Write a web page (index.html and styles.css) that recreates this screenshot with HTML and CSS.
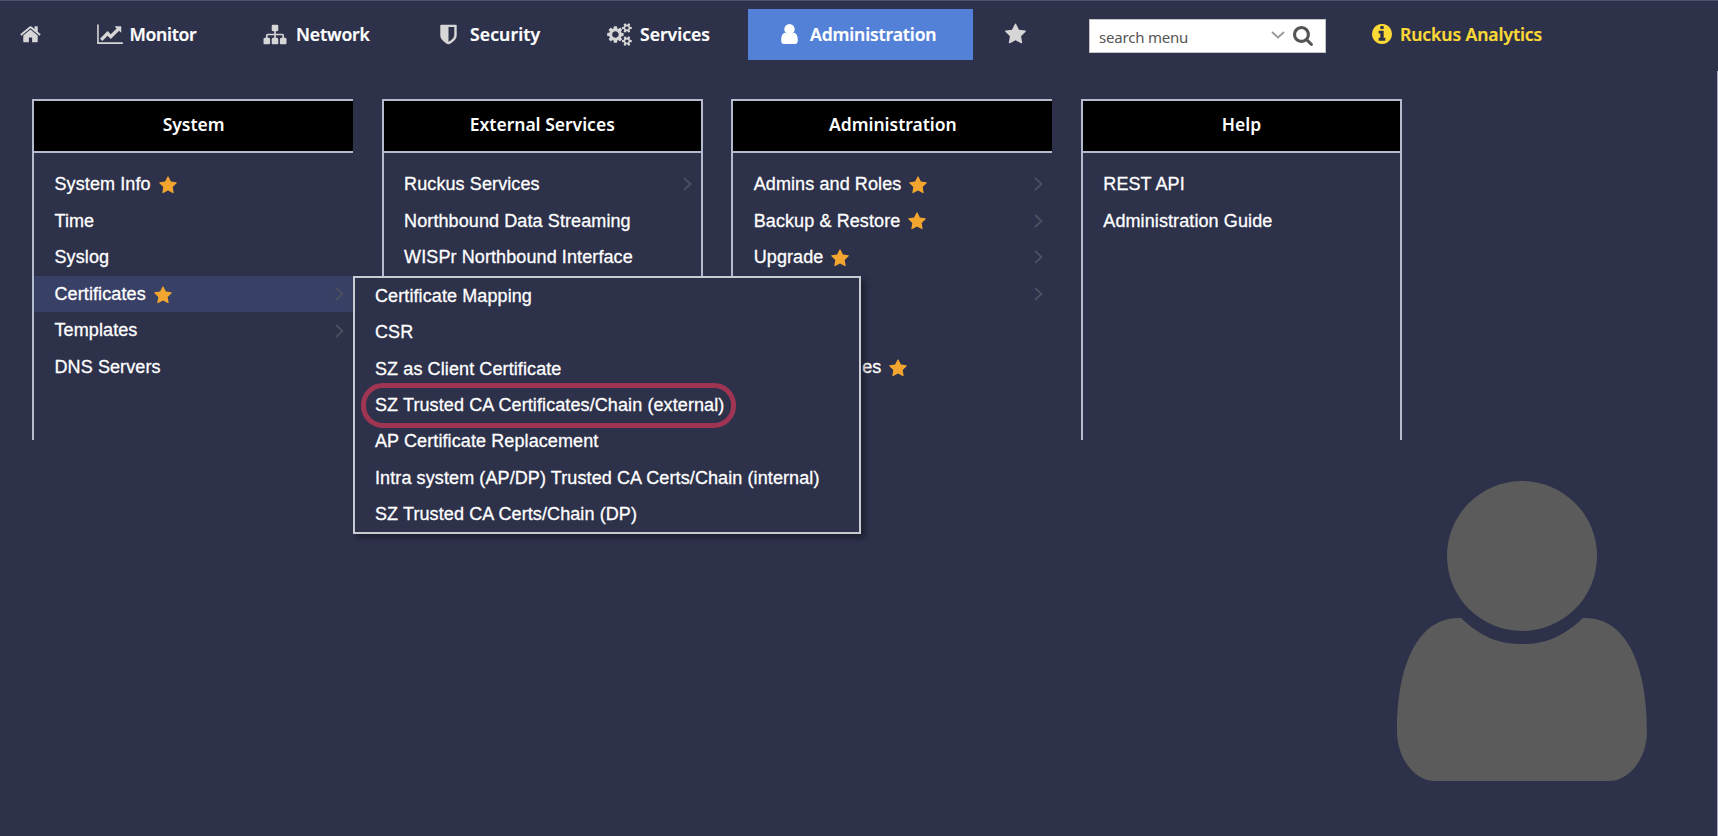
FILE: index.html
```html
<!DOCTYPE html>
<html lang="en">
<head>
<meta charset="utf-8">
<title>Administration</title>
<link rel="stylesheet" href="styles.css">
</head>
<body>
<svg class="defs" aria-hidden="true">
  <symbol id="home" viewBox="64 0 1664 1792"><path d="M1472 992v480q0 26-19 45t-45 19h-384v-384h-256v384h-384q-26 0-45-19t-19-45v-480q0-1 .5-3t.5-3l575-474 575 474q1 2 1 6zm223-69l-62 74q-8 9-21 11h-3q-13 0-21-7l-692-577-692 577q-12 8-24 7-13-2-21-11l-62-74q-8-10-7-23.5t11-21.5l719-599q32-26 76-26t76 26l244 204v-195q0-14 9-23t23-9h192q14 0 23 9t9 23v408l219 182q10 8 11 21.5t-7 23.5z"/></symbol>
  <symbol id="chart" viewBox="0 0 2048 1792"><path d="M2048 1536v128h-2048v-1536h128v1408h1920zm-128-1248v435q0 21-19.5 29.5t-35.5-7.5l-121-121-633 633q-10 10-23 10t-23-10l-233-233-416 416-192-192 585-585q10-10 23-10t23 10l233 233 464-464-121-121q-16-16-7.5-35.5t29.5-19.5h435q14 0 23 9t9 23z"/></symbol>
  <symbol id="sitemap" viewBox="0 0 1792 1792"><path d="M1792 1248v320q0 40-28 68t-68 28h-320q-40 0-68-28t-28-68v-320q0-40 28-68t68-28h96v-192h-512v192h96q40 0 68 28t28 68v320q0 40-28 68t-68 28h-320q-40 0-68-28t-28-68v-320q0-40 28-68t68-28h96v-192h-512v192h96q40 0 68 28t28 68v320q0 40-28 68t-68 28h-320q-40 0-68-28t-28-68v-320q0-40 28-68t68-28h96v-192q0-52 38-90t90-38h512v-192h-96q-40 0-68-28t-28-68v-320q0-40 28-68t68-28h320q40 0 68 28t28 68v320q0 40-28 68t-68 28h-96v192h512q52 0 90 38t38 90v192h96q40 0 68 28t28 68z"/></symbol>
  <symbol id="shield" viewBox="256 0 1280 1792"><path d="M1344 960v-640h-448v1137q119-63 213-137 235-184 235-360zm192-768v768q0 86-33.5 170.5t-83 150-118 127.5-126.5 103-121 77.5-89.5 49.5-42.5 20q-12 6-26 6t-26-6q-16-7-42.5-20t-89.5-49.5-121-77.5-126.5-103-118-127.5-83-150-33.5-170.5v-768q0-26 19-45t45-19h1152q26 0 45 19t19 45z"/></symbol>
  <symbol id="cogs" viewBox="0 0 1920 1792"><path d="M896 896q0-106-75-181t-181-75-181 75-75 181 75 181 181 75 181-75 75-181zm768 512q0-52-38-90t-90-38-90 38-38 90q0 53 37.5 90.5t90.5 37.5 90.5-37.5 37.5-90.5zm0-1024q0-52-38-90t-90-38-90 38-38 90q0 53 37.5 90.5t90.5 37.5 90.5-37.5 37.5-90.5zm-384 421v185q0 10-7 19.5t-16 10.5l-155 24q-11 35-32 76 34 48 90 115 7 11 7 20 0 12-7 19-23 30-82.5 89.5t-78.5 59.5q-11 0-21-7l-115-90q-37 19-77 31-11 108-23 155-7 24-30 24h-186q-11 0-20-7.5t-10-17.5l-23-153q-34-10-75-31l-118 89q-7 7-20 7-11 0-21-8-144-133-144-160 0-9 7-19 10-14 41-53t47-61q-23-44-35-82l-152-24q-10-1-17-9.5t-7-19.5v-185q0-10 7-19.5t16-10.5l155-24q11-35 32-76-34-48-90-115-7-11-7-20 0-12 7-20 22-30 82-89t79-59q11 0 21 7l115 90q34-18 77-32 11-108 23-154 7-24 30-24h186q11 0 20 7.5t10 17.5l23 153q34 10 75 31l118-89q8-7 20-7 11 0 21 8 144 133 144 160 0 8-7 19-12 16-42 54t-45 60q23 48 34 82l152 23q10 2 17 10.5t7 19.5zm640 533v140q0 16-149 31-12 27-30 52 51 113 51 138 0 4-4 7-122 71-124 71-8 0-46-47t-52-68q-20 2-30 2t-30-2q-14 21-52 68t-46 47q-2 0-124-71-4-3-4-7 0-25 51-138-18-25-30-52-149-15-149-31v-140q0-16 149-31 13-29 30-52-51-113-51-138 0-4 4-7 4-2 35-20t59-34 30-16q8 0 46 46.5t52 67.5q20-2 30-2t30 2q51-71 92-112l6-2q4 0 124 70 4 3 4 7 0 25-51 138 17 23 30 52 149 15 149 31zm0-1024v140q0 16-149 31-12 27-30 52 51 113 51 138 0 4-4 7-122 71-124 71-8 0-46-47t-52-68q-20 2-30 2t-30-2q-14 21-52 68t-46 47q-2 0-124-71-4-3-4-7 0-25 51-138-18-25-30-52-149-15-149-31v-140q0-16 149-31 13-29 30-52-51-113-51-138 0-4 4-7 4-2 35-20t59-34 30-16q8 0 46 46.5t52 67.5q20-2 30-2t30 2q51-71 92-112l6-2q4 0 124 70 4 3 4 7 0 25-51 138 17 23 30 52 149 15 149 31z"/></symbol>
  <symbol id="star" viewBox="64 0 1664 1792"><path d="M1728 647q0 22-26 48l-363 354 86 500q1 7 1 20 0 21-10.5 35.5t-30.5 14.5q-19 0-40-12l-449-236-449 236q-22 12-40 12-21 0-31.5-14.5t-10.5-35.5q0-6 2-20l86-500-364-354q-25-27-25-48 0-37 56-46l502-73 225-455q19-41 49-41t49 41l225 455 502 73q56 9 56 46z"/></symbol>
  <symbol id="search" viewBox="64 128 1664 1664"><path d="M1216 832q0-185-131.5-316.5t-316.5-131.5-316.5 131.5-131.5 316.5 131.5 316.5 316.5 131.5 316.5-131.5 131.5-316.5zm512 832q0 52-38 90t-90 38q-54 0-90-38l-343-342q-179 124-399 124-143 0-273.5-55.5t-225-150-150-225-55.5-273.5 55.5-273.5 150-225 225-150 273.5-55.5 273.5 55.5 225 150 150 225 55.5 273.5q0 220-124 399l343 343q37 37 37 90z"/></symbol>
  <symbol id="info" viewBox="128 128 1536 1536"><path d="M1152 1376v-160q0-14-9-23t-23-9h-96v-512q0-14-9-23t-23-9h-320q-14 0-23 9t-9 23v160q0 14 9 23t23 9h96v320h-96q-14 0-23 9t-9 23v160q0 14 9 23t23 9h448q14 0 23-9t9-23zm-128-896v-160q0-14-9-23t-23-9h-192q-14 0-23 9t-9 23v160q0 14 9 23t23 9h192q14 0 23-9t9-23zm640 416q0 209-103 385.5t-279.5 279.5-385.5 103-385.5-103-279.5-279.5-103-385.5 103-385.5 279.5-279.5 385.5-103 385.5 103 279.5 279.5 103 385.5z"/></symbol>
  <symbol id="user" viewBox="0 0 250 300"><circle cx="125" cy="75" r="75"/><path d="M64 137C88 160 108 163 125 163S162 160 186 137C228 135 250 182 250 250C250 277 233 300 212 300H38C17 300 0 277 0 250C0 182 22 135 64 137Z"/></symbol>
  <symbol id="user-small" viewBox="0 0 250 300"><circle cx="125" cy="78" r="78"/><path d="M58 132Q125 170 192 132C230 135 250 182 250 250C250 277 233 300 212 300H38C17 300 0 277 0 250C0 182 20 135 58 132Z"/></symbol>
  <symbol id="next" viewBox="0 0 9 14"><path d="M1 1L7.5 7L1 13" fill="none" stroke="currentColor" stroke-width="1.8"/></symbol>
  <symbol id="down" viewBox="0 0 14 8"><path d="M1 1L7 6.5L13 1" fill="none" stroke="currentColor" stroke-width="1.8"/></symbol>
</svg>

<nav class="nav">
  <a class="nav-item"><svg class="i-home"><use href="#home"/></svg></a>
  <a class="nav-item monitor"><svg class="i-chart"><use href="#chart"/></svg><span>Monitor</span></a>
  <a class="nav-item network"><svg class="i-sitemap"><use href="#sitemap"/></svg><span>Network</span></a>
  <a class="nav-item security"><svg class="i-shield"><use href="#shield"/></svg><span>Security</span></a>
  <a class="nav-item services"><svg class="i-cogs"><use href="#cogs"/></svg><span>Services</span></a>
  <a class="nav-item active"><svg class="i-user"><use href="#user-small"/></svg><span>Administration</span></a>
  <a class="nav-item fav"><svg class="i-home"><use href="#star"/></svg></a>
  <div class="search"><span>search menu</span><svg class="i-down"><use href="#down"/></svg><svg class="i-search"><use href="#search"/></svg></div>
  <a class="nav-item analytics"><svg class="i-info"><use href="#info"/></svg><span>Ruckus Analytics</span></a>
</nav>

<main class="menus">
  <section class="menu">
    <h2>System</h2>
    <ul>
      <li><span>System Info</span><svg class="fav-star"><use href="#star"/></svg></li>
      <li><span>Time</span></li>
      <li><span>Syslog</span></li>
      <li class="open"><span>Certificates</span><svg class="fav-star"><use href="#star"/></svg><svg class="next"><use href="#next"/></svg>
        <div class="submenu">
          <span>Certificate Mapping</span>
          <span>CSR</span>
          <span>SZ as Client Certificate</span>
          <span class="marked">SZ Trusted CA Certificates/Chain (external)</span>
          <span>AP Certificate Replacement</span>
          <span>Intra system (AP/DP) Trusted CA Certs/Chain (internal)</span>
          <span>SZ Trusted CA Certs/Chain (DP)</span>
        </div>
      </li>
      <li><span>Templates</span><svg class="next"><use href="#next"/></svg></li>
      <li><span>DNS Servers</span></li>
    </ul>
  </section>
  <section class="menu closed">
    <h2>External Services</h2>
    <ul>
      <li><span>Ruckus Services</span><svg class="next"><use href="#next"/></svg></li>
      <li><span>Northbound Data Streaming</span></li>
      <li><span>WISPr Northbound Interface</span></li>
    </ul>
  </section>
  <section class="menu">
    <h2>Administration</h2>
    <ul>
      <li><span>Admins and Roles</span><svg class="fav-star"><use href="#star"/></svg><svg class="next"><use href="#next"/></svg></li>
      <li><span>Backup &amp; Restore</span><svg class="fav-star"><use href="#star"/></svg><svg class="next"><use href="#next"/></svg></li>
      <li><span>Upgrade</span><svg class="fav-star"><use href="#star"/></svg><svg class="next"><use href="#next"/></svg></li>
      <li><svg class="next"><use href="#next"/></svg></li>
      <li></li>
      <li class="covered"><span>es</span><svg class="fav-star"><use href="#star"/></svg></li>
    </ul>
  </section>
  <section class="menu closed">
    <h2>Help</h2>
    <ul>
      <li><span>REST API</span></li>
      <li><span>Administration Guide</span></li>
    </ul>
  </section>
</main>
<svg class="backdrop"><use href="#user"/></svg>
<div class="edge"></div>
</body>
</html>
```

FILE: styles.css
```css
*, *::after { box-sizing: border-box; }
body {
  margin: 0;
  width: 1718px;
  height: 836px;
  position: relative;
  overflow: hidden;
  background: #2d314a;
  border-top: 1px solid #4b516b;
  color: #fff;
  font: 18px/36.4px "Liberation Sans", Arial, sans-serif;
}
svg { fill: currentColor; flex: none; display: block; }
.defs { position: absolute; width: 0; height: 0; }

.nav {
  display: grid;
  grid-template-columns: 77px 166px 175px 169px 141px 257px 84px 283px auto;
  align-items: center;
  height: 66px;
  padding-left: 20px;
  font: 600 17.6px/24px "Noto Sans", sans-serif;
}
.nav-item { display: flex; align-items: center; color: #d6d6d6; }
.nav-item span { color: #fff; white-space: nowrap; -webkit-text-stroke: 0.2px; }
.monitor { gap: 6.5px; letter-spacing: -0.3px; }
.network { gap: 9px; letter-spacing: -0.15px; }
.security { gap: 13px; padding-left: 2px; letter-spacing: 0.1px; }
.services { gap: 8px; letter-spacing: 0; }
.nav .active {
  width: 225px;
  height: 51px;
  padding-left: 33px;
  gap: 12px;
  background: #5281d7;
  color: #fff;
  letter-spacing: -0.15px;
}
.analytics, .analytics span { color: #fbd936; }
.analytics { gap: 8px; letter-spacing: -0.1px; }
.i-home { width: 21px; height: 22.5px; }
.i-chart { width: 26px; height: 22.5px; }
.i-sitemap { width: 24px; height: 23px; }
.i-shield { width: 17px; height: 23px; }
.i-cogs { width: 25px; height: 23px; }
.i-user { width: 17px; height: 20px; }
.i-info { width: 20px; height: 20px; }

.search {
  display: flex;
  align-items: center;
  width: 237px;
  height: 34px;
  margin-top: 3px;
  padding: 0 12px 0 9px;
  border: 1px solid #c5c5c5;
  background: #fff;
  color: #555;
  font: 15px/20px "Noto Sans", sans-serif;
  letter-spacing: -0.2px;
}
.search span { flex: 1; padding-top: 3px; }
.i-down { width: 14px; height: 8px; color: #999; margin: -2px 8px 0 0; }
.i-search { width: 20px; height: 20px; color: #555; }

.menus {
  display: flex;
  gap: 28.3px;
  padding: 32px 0 0 32px;
}
.menu {
  width: 321.3px;
  height: 341px;
  border-left: 2px solid #b4bbcd;
}
.closed { border-right: 2px solid #b4bbcd; }
.menu h2 {
  margin: 0;
  height: 54px;
  border: solid #b4bbcd;
  border-width: 2px 0;
  background: #000;
  font: 600 17.5px/47px "Noto Sans", sans-serif;
  text-align: center;
}
.menu ul { list-style: none; margin: 0; padding: 13px 0 0; letter-spacing: 0.1px; }
.menu li {
  position: relative;
  display: flex;
  align-items: center;
  height: 36.6px;
  padding: 0 9px 0 20.5px;
  white-space: nowrap;
}
.menu li span { -webkit-text-stroke: 0.3px; }
.menu li.open { background: #394065; }
.menu li.covered { padding-left: 129px; }
.fav-star { width: 18px; height: 19px; margin: 2px 0 0 8px; color: #f3a62f; }
.next { width: 9px; height: 14px; margin-left: auto; color: #4d505f; }

.submenu {
  position: absolute;
  z-index: 2;
  left: 319px;
  top: 0;
  width: 508px;
  height: 258px;
  padding-left: 20px;
  border: 2px solid #c9cbd2;
  background: #2d314a;
  box-shadow: 4px 4px 6px rgba(0, 0, 0, .35);
}
.submenu span { display: block; width: max-content; position: relative; }
.marked::after {
  content: "";
  position: absolute;
  left: -14px;
  top: -4px;
  width: 375px;
  height: 45px;
  border: 5px solid #9f3553;
  border-radius: 22px;
}
.backdrop {
  position: absolute;
  left: 1397px;
  top: 480px;
  width: 250px;
  height: 300px;
  color: #5b5b5b;
}
.edge {
  position: absolute;
  right: 0;
  top: 70px;
  bottom: 0;
  width: 1px;
  background: #aaacb8;
}
```
